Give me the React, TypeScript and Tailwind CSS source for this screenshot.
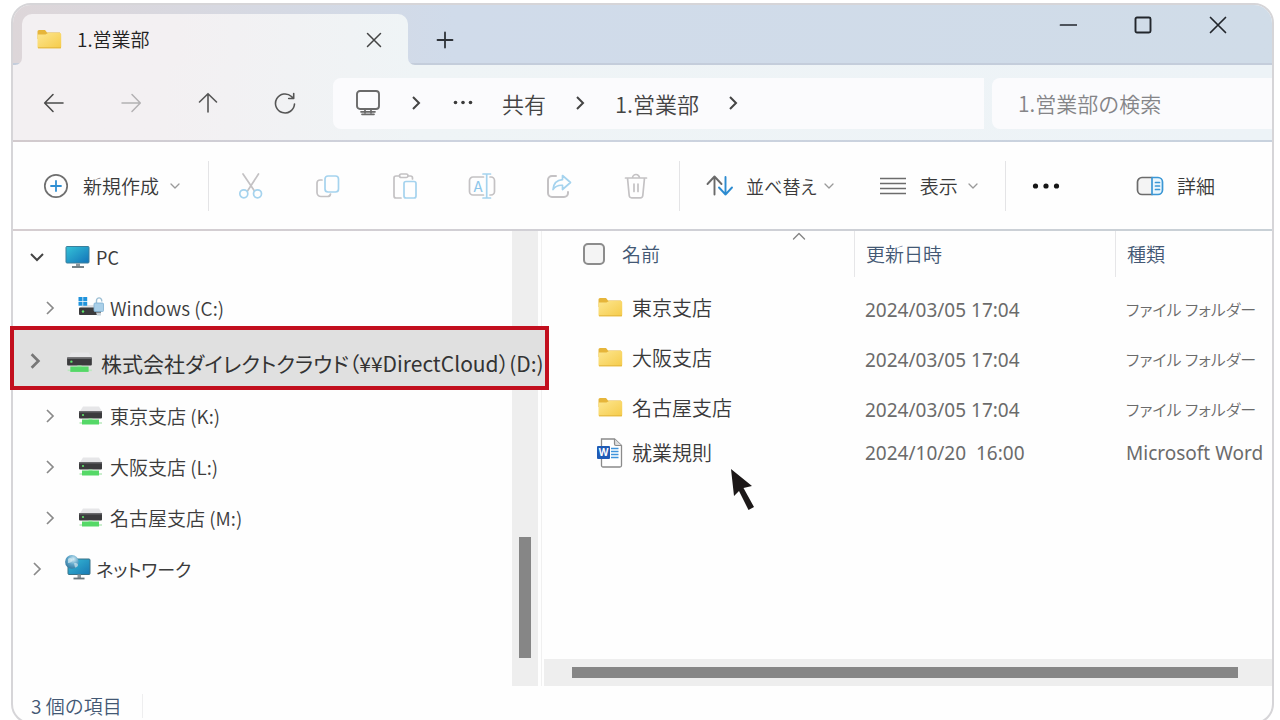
import type { ReactNode } from 'react';

type IconProps = { className?: string };

const stroke = {
  fill: 'none',
  stroke: 'currentColor',
  strokeLinecap: 'round' as const,
  strokeLinejoin: 'round' as const,
};

function Folder({ className = '' }: IconProps) {
  return (
    <svg width="26" height="22" viewBox="0 0 26 22" className={className} aria-hidden="true">
      <defs>
        <linearGradient id="folder-front" x1="0" y1="0" x2="1" y2="1">
          <stop offset="0" stopColor="#fde68f" />
          <stop offset="1" stopColor="#f5cb4a" />
        </linearGradient>
      </defs>
      <path d="M1.500 2.500A1.500 1.500 0 0 1 3 1H9l2 2.500H24V10H1.500z" fill="#e6b53a" />
      <path d="M1.500 5.500h8L12 4h12a1.200 1.200 0 0 1 1.200 1.200V18a1.200 1.200 0 0 1-1.200 1.200H2.700A1.200 1.200 0 0 1 1.500 18z" fill="url(#folder-front)" />
      <path d="M2 18.800h23" stroke="#e3b53c" strokeWidth="1" />
    </svg>
  );
}

function WordFile() {
  return (
    <svg width="26" height="30" viewBox="0 0 26 30" aria-hidden="true">
      <path d="M4.500 1h13L24.500 7.500V27.500a1.500 1.500 0 0 1-1.500 1.500H6a1.500 1.500 0 0 1-1.500-1.500z" fill="#fff" stroke="#8b8b8b" strokeWidth="1.300" />
      <path d="M17.500 1v5a1.500 1.500 0 0 0 1.500 1.500h5.500" fill="#ddd" stroke="#8b8b8b" strokeWidth="1.200" />
      <path d="M14 10.500h7.500M14 13.500h7.500M14 16.500h7.500M14 19.500h7.500" stroke="#3f94dc" strokeWidth="1.500" />
      <rect x="0" y="8" width="13" height="13" rx="1" fill="#1f5bb5" />
      <text x="6.500" y="18" textAnchor="middle" fontSize="10" fontWeight="700" fill="#fff" fontFamily="Open Sans, sans-serif">W</text>
    </svg>
  );
}

function Monitor() {
  return (
    <svg width="26" height="24" viewBox="0 0 26 24" aria-hidden="true">
      <defs>
        <linearGradient id="screen" x1="0" y1="0" x2="1" y2="1">
          <stop offset="0" stopColor="#35c3d8" />
          <stop offset="1" stopColor="#1272b8" />
        </linearGradient>
      </defs>
      <rect x="1" y="1.500" width="23" height="16.500" rx="1" fill="url(#screen)" stroke="#3a7f9c" strokeWidth="1" />
      <path d="M11 18.500h4v3h-4z" fill="#8d979c" />
      <path d="M7 22h12" stroke="#66747b" strokeWidth="1.800" />
    </svg>
  );
}

function NetworkIcon() {
  return (
    <svg width="28" height="28" viewBox="0 0 28 28" className="-mr-[2px] shrink-0" aria-hidden="true">
      <defs>
        <linearGradient id="net-screen" x1="0" y1="0" x2="1" y2="1">
          <stop offset="0" stopColor="#37bcd6" />
          <stop offset="1" stopColor="#1878b4" />
        </linearGradient>
        <radialGradient id="globe" cx="0.6" cy="0.3" r="0.8">
          <stop offset="0" stopColor="#d4ecf5" />
          <stop offset="0.500" stopColor="#5da4c8" />
          <stop offset="1" stopColor="#2e6f96" />
        </radialGradient>
      </defs>
      <rect x="3" y="4" width="22" height="15.500" rx="1" fill="url(#net-screen)" stroke="#3a7287" strokeWidth="1" />
      <path d="M12.500 19.500H16V23h-3.500z" fill="#8d979c" />
      <path d="M8.500 23.500h11" stroke="#66747b" strokeWidth="1.800" />
      <circle cx="6.900" cy="6.900" r="6.800" fill="url(#globe)" />
      <path d="M3 4c2-2 4-.5 4.500 1S5 8 3 8zM9 8.500c2-1 4 0 4 1.500s-2 3-3 2.500z" fill="#e4f3f7" opacity=".6" />
    </svg>
  );
}

function Drive({ className = 'w-[26px]' }: IconProps) {
  return (
    <svg viewBox="0 0 26 20" className={`shrink-0 ${className}`} aria-hidden="true">
      <path d="M5 .5h16l3.500 5.500h-23z" fill="#e6e6e8" />
      <rect x="1" y="5" width="23" height="7.500" rx="1" fill="#3b3b3d" />
      <rect x="1" y="5" width="23" height="1.500" fill="#69696c" />
      <circle cx="5" cy="9" r="1.100" fill="#5fe36a" />
      <path d="M1.500 17h22.500" stroke="#b9e8bd" strokeWidth="1.500" />
      <path d="M4 13.500h17v5H4z" fill="#55d867" />
      <path d="M10.500 12.500h4V14h-4z" fill="#8ae895" />
    </svg>
  );
}

function SystemDrive() {
  return (
    <svg width="26" height="22" viewBox="0 0 26 22" aria-hidden="true">
      <path d="M5 8h17l2 4H1z" fill="#e1e1e3" />
      <rect x="1" y="10.500" width="22" height="7.500" rx="1" fill="#3b3b3d" />
      <circle cx="5" cy="14.500" r="1.200" fill="#5fe36a" />
      <path d="M.5 0h4v4h-4zM5.200 0h4v4h-4zM.5 4.700h4v4h-4zM5.200 4.700h4v4h-4z" fill="#1f93dc" />
      <path d="M18.500 7V3.500a2.600 2.600 0 0 1 5.200 0v1" fill="none" stroke="#9dbfd4" strokeWidth="1.400" />
      <rect x="16" y="6" width="9.500" height="8.500" rx="1" fill="#a9cfe8" stroke="#7fb0d0" strokeWidth=".8" />
      <path d="M18 15.500h5v3h-4z" fill="#c9d3da" />
    </svg>
  );
}

function Chevron({ className = '' }: IconProps) {
  return (
    <svg viewBox="0 0 16 16" className={`shrink-0 ${className}`} {...stroke} strokeLinecap="butt" strokeLinejoin="miter" aria-hidden="true">
      <path d="M5 2l6 6-6 6" />
    </svg>
  );
}

function SmallDown() {
  return (
    <svg width="12" height="12" viewBox="0 0 12 12" className="text-[#9a9a9a]" {...stroke} strokeWidth="1.300" aria-hidden="true">
      <path d="M2 4l4 4 4-4" />
    </svg>
  );
}

function IconButton({ label, className = '', children }: { label: string; className?: string; children: ReactNode }) {
  return (
    <button type="button" aria-label={label} className={`flex shrink-0 items-center justify-center ${className}`}>
      {children}
    </button>
  );
}

function TitleBar() {
  return (
    <header className="flex h-[60px] items-end rounded-t-[18px] bg-linear-to-r from-[#ddd6d9] via-[#d0dbea] via-35% to-[#d0dce8] pl-[9px] shadow-[inset_0_-2px_0_#c4cddb]">
      <div className="relative flex h-[51px] w-[386px] shrink-0 items-center rounded-t-[10px] bg-linear-to-r from-[#f3f0f2] from-40% to-[#eff4f6] pr-[22px] pl-[14px]">
        <svg className="absolute bottom-0 -left-[7px] text-[#f3f0f2]" width="7" height="7" viewBox="0 0 7 7" aria-hidden="true">
          <path d="M7 0v7H0a7 7 0 0 0 7-7z" fill="currentColor" />
        </svg>
        <svg className="absolute -right-[7px] bottom-0 text-[#eff4f6]" width="7" height="7" viewBox="0 0 7 7" aria-hidden="true">
          <path d="M0 0v7h7a7 7 0 0 1-7-7z" fill="currentColor" />
        </svg>
        <Folder />
        <span className="ml-[15px] flex-1 pb-px text-[19px] leading-6 text-[#222]">1.営業部</span>
        <IconButton label="タブを閉じる" className="size-6 text-[#444]">
          <svg width="16" height="16" viewBox="0 0 16 16" {...stroke} strokeWidth="1.500"><path d="M1.500 1.500l13 13M14.500 1.500l-13 13" /></svg>
        </IconButton>
      </div>
      <IconButton label="新しいタブ" className="ml-[17px] h-[51px] w-10 text-[#2e3238]">
        <svg width="18" height="18" viewBox="0 0 18 18" {...stroke} strokeWidth="1.800"><path d="M9 1.500v15M1.500 9h15" /></svg>
      </IconButton>
      <div className="mr-[17px] ml-auto flex self-start text-[#22262c]">
        <IconButton label="最小化" className="h-10 w-[75px]">
          <svg width="18" height="18" viewBox="0 0 18 18" {...stroke} strokeWidth="1.700"><path d="M1.500 9h16" /></svg>
        </IconButton>
        <IconButton label="最大化" className="h-10 w-[75px]">
          <svg width="18" height="18" viewBox="0 0 18 18" {...stroke} strokeWidth="1.900"><rect x="1.500" y="1.500" width="15" height="15" rx="1.500" /></svg>
        </IconButton>
        <IconButton label="閉じる" className="h-10 w-[75px]">
          <svg width="18" height="18" viewBox="0 0 18 18" {...stroke} strokeWidth="1.700"><path d="M1.500 1.500l15 15M16.500 1.500l-15 15" /></svg>
        </IconButton>
      </div>
    </header>
  );
}

function NavBar() {
  return (
    <div className="h-[77px] bg-linear-to-r from-[#d2cacd] via-[#cdd3df] via-35% to-[#c8d2de] pb-[2px]">
      <nav aria-label="ナビゲーション" className="flex h-full items-center bg-linear-to-r from-[#f3f0f2] from-12% via-[#eff4f6] via-32% to-[#edf3f7] pt-px pl-[2px]">
        <IconButton label="戻る" className="h-12 w-[77px] text-[#4b4b4b]">
          <svg width="22" height="22" viewBox="0 0 22 22" {...stroke} strokeWidth="1.600"><path d="M20 11H2M10 2.500L1.700 11l8.300 8.500" /></svg>
        </IconButton>
        <IconButton label="進む" className="h-12 w-[77px] text-[#b3b1b3]">
          <svg width="22" height="22" viewBox="0 0 22 22" {...stroke} strokeWidth="1.500"><path d="M2 11h18M12 2.500l8.300 8.500-8.300 8.500" /></svg>
        </IconButton>
        <IconButton label="上へ" className="h-12 w-[77px] text-[#555]">
          <svg width="22" height="22" viewBox="0 0 22 22" {...stroke} strokeWidth="1.600"><path d="M11 20V2M2.500 10L11 1.700l8.500 8.300" /></svg>
        </IconButton>
        <IconButton label="更新" className="h-12 w-[77px] text-[#555]">
          <svg width="22" height="22" viewBox="0 0 22 22" {...stroke} strokeWidth="1.600"><path d="M20.500 12a9.500 9.500 0 1 1-3-7.500l2 2M19.700 1.500V6.500H14.700" /></svg>
        </IconButton>
        <div className="ml-[10px] flex h-[51px] flex-1 items-center rounded-l-lg bg-[#fbfbfd] pl-[22px] text-[22px] leading-7 text-[#444]">
          <svg width="26" height="28" viewBox="0 0 26 28" className="text-[#6a6a6a]" {...stroke} strokeWidth="1.900" aria-hidden="true">
            <rect x="2" y="2" width="22" height="18" rx="3" />
            <path d="M10 20v4M16 20v4M6 22.800h14" strokeWidth="1.700" />
            <path d="M7 25.300h12" strokeWidth="1.700" />
          </svg>
          <Chevron className="ml-[27px] size-4 stroke-2" />
          <svg width="20" height="6" viewBox="0 0 20 6" className="ml-[29px] text-[#3a3a3a]" fill="currentColor" aria-hidden="true">
            <circle cx="2.500" cy="2.500" r="1.800" /><circle cx="10" cy="2.500" r="1.800" /><circle cx="17.500" cy="2.500" r="1.800" />
          </svg>
          <a href="#share" className="ml-[29px]">共有</a>
          <Chevron className="ml-[26px] size-4 stroke-2" />
          <a href="#sales" className="ml-[27px]">1.営業部</a>
          <Chevron className="ml-[26px] size-4 stroke-2" />
        </div>
        <input
          type="search"
          aria-label="1.営業部の検索"
          placeholder="1.営業部の検索"
          className="ml-2 h-[51px] w-[280px] shrink-0 rounded-l-lg bg-[#fbfbfd] pl-[26px] text-[21px] outline-none placeholder:text-[#858588] placeholder:opacity-100"
        />
      </nav>
    </div>
  );
}

function Divider({ className = '' }: IconProps) {
  return <span className={`h-[50px] w-px shrink-0 bg-[#e4e4e6] ${className}`} />;
}

function Toolbar() {
  const gray = '#c4c2c4';
  const blue = '#a5d3ee';
  return (
    <div className="h-[89px] bg-linear-to-r from-[#d5cdd0] via-[#d0d0d6] to-[#c8d0d6] pb-[2px]">
      <div role="toolbar" className="flex h-full items-center bg-[#fefefe] pt-px text-[19px] leading-6 text-[#3a3a3a]">
        <button type="button" className="ml-[30px] flex shrink-0 items-center">
          <svg width="26" height="26" viewBox="0 0 26 26" {...stroke} aria-hidden="true">
            <circle cx="13" cy="13" r="11.200" stroke="#6f6f6f" strokeWidth="1.700" />
            <path d="M13 8v10M8 13h10" stroke="#2f8fd3" strokeWidth="1.800" />
          </svg>
          <span className="mr-[10px] ml-[14px]">新規作成</span>
          <SmallDown />
        </button>
        <Divider className="mr-[3px] ml-[27px]" />
        <IconButton label="切り取り" className="h-12 w-[77px]">
          <svg width="26" height="28" viewBox="0 0 26 28" {...stroke} strokeWidth="1.700">
            <path d="M5 2l11.500 17M20.500 2L9.500 19" stroke={gray} />
            <circle cx="5.800" cy="21.800" r="4" stroke={blue} /><circle cx="19.500" cy="21.800" r="4" stroke={blue} />
          </svg>
        </IconButton>
        <IconButton label="コピー" className="h-12 w-[77px]">
          <svg width="26" height="26" viewBox="0 0 26 26" {...stroke} strokeWidth="1.700">
            <path d="M7 7H5a3 3 0 0 0-3 3v9.500a4 4 0 0 0 4 4h6.500a3 3 0 0 0 3-2.500" stroke={gray} />
            <rect x="10" y="3" width="13.500" height="16" rx="3" stroke={blue} />
          </svg>
        </IconButton>
        <IconButton label="貼り付け" className="h-12 w-[77px]">
          <svg width="26" height="28" viewBox="0 0 26 28" {...stroke} strokeWidth="1.700">
            <path d="M7.500 4H4a2 2 0 0 0-2 2v18a2 2 0 0 0 2 2h5M16 4h2.500a2 2 0 0 1 2 2v1" stroke={gray} />
            <rect x="7.500" y="2" width="8.500" height="3.500" rx="1.700" stroke={gray} />
            <rect x="12" y="9.500" width="12" height="16.500" rx="2" stroke={blue} />
          </svg>
        </IconButton>
        <IconButton label="名前の変更" className="h-12 w-[77px]">
          <svg width="28" height="28" viewBox="0 0 28 28" {...stroke} strokeWidth="1.700">
            <path d="M15.500 5H5a3.500 3.500 0 0 0-3.500 3.500v11A3.500 3.500 0 0 0 5 23h10.500M22 5h1a3.500 3.500 0 0 1 3.500 3.500v11A3.500 3.500 0 0 1 23 23h-1" stroke={gray} />
            <path d="M15 2h7.500M15 26h7.500M18.700 2v24" stroke={blue} />
            <text x="10" y="19.500" textAnchor="middle" fontSize="15" fontFamily="Noto Sans CJK JP, sans-serif" fontWeight="400" fill="#8cc6ea" stroke="none">A</text>
          </svg>
        </IconButton>
        <IconButton label="共有" className="h-12 w-[77px]">
          <svg width="26" height="26" viewBox="0 0 26 26" {...stroke} strokeWidth="1.700">
            <path d="M10 3H6a4 4 0 0 0-4 4v13a4 4 0 0 0 4 4h12a4 4 0 0 0 4-4v-1" stroke={gray} strokeWidth="2" />
            <path d="M16.500 2.500L24.500 9.500l-8 7v-4.200c-4.500-.3-7.500 1.200-9.500 4.200.5-6 4-9.300 9.500-9.800z" stroke={blue} />
          </svg>
        </IconButton>
        <IconButton label="削除" className="h-12 w-[77px]">
          <svg width="24" height="28" viewBox="0 0 24 28" {...stroke} stroke={gray} strokeWidth="1.700">
            <path d="M1.500 6h21M8.500 6a3.500 3.500 0 0 1 7 0M3.500 6l1.700 17.500A2.500 2.500 0 0 0 7.700 25.800h8.600a2.500 2.500 0 0 0 2.500-2.300L20.500 6M10 12v7.500M14 12v7.500" />
          </svg>
        </IconButton>
        <Divider className="mr-[26px] ml-[5px]" />
        <button type="button" className="flex shrink-0 items-center">
          <svg width="28" height="24" viewBox="0 0 28 24" {...stroke} strokeWidth="1.900" aria-hidden="true">
            <path d="M8.500 20.500V3M1.500 10l7-7.500 7 7.500" stroke="#6a6a6a" />
            <path d="M19.500 3v17.500M13 13.500l6.500 7 6.500-7" stroke="#2c8bd0" />
          </svg>
          <span className="mr-[6px] ml-3 text-[18px] [font-feature-settings:'palt']">並べ替え</span>
          <SmallDown />
        </button>
        <button type="button" className="ml-[44px] flex shrink-0 items-center">
          <svg width="28" height="20" viewBox="0 0 28 20" stroke="#6c6c6c" strokeWidth="1.700" aria-hidden="true">
            <path d="M1 2.500h26M1 7.500h26M1 12.500h26M1 17.500h26" />
          </svg>
          <span className="mr-[9px] ml-[13px]">表示</span>
          <SmallDown />
        </button>
        <Divider className="mr-6 ml-[26px]" />
        <IconButton label="その他" className="h-12 w-8 text-[#161616]">
          <svg width="28" height="6" viewBox="0 0 28 6" fill="currentColor">
            <circle cx="3.500" cy="3" r="2.600" /><circle cx="14" cy="3" r="2.600" /><circle cx="24.500" cy="3" r="2.600" />
          </svg>
        </IconButton>
        <button type="button" className="mr-[57px] ml-auto flex shrink-0 items-center">
          <svg width="28" height="20" viewBox="0 0 28 20" {...stroke} strokeWidth="1.700" aria-hidden="true">
            <path d="M16 1.500H6A4.500 4.500 0 0 0 1.500 6v8A4.500 4.500 0 0 0 6 18.500h10" fill="#f4f4f4" stroke="#6c6c6c" />
            <path d="M16 1.500h6A4.500 4.500 0 0 1 26.500 6v8a4.500 4.500 0 0 1-4.500 4.500h-6z" fill="#eaf6fd" stroke="#3b97d5" />
            <path d="M19.500 6.500h4M19.500 10h4M19.500 13.500h4" stroke="#3b97d5" />
          </svg>
          <span className="ml-[13px]">詳細</span>
        </button>
      </div>
    </div>
  );
}

function TreeRow({ icon, label, nested = false, open = false }: { icon: ReactNode; label: string; nested?: boolean; open?: boolean }) {
  return (
    <li className={`flex h-[51px] items-center ${nested ? 'pl-[29px]' : 'pl-4'}`}>
      <Chevron className={open ? 'size-4 rotate-90 stroke-2 text-[#444]' : 'size-4 stroke-[1.7] text-[#8a8a8a]'} />
      <span className="ml-5 flex w-[26px] shrink-0 items-center">{icon}</span>
      <span className={`leading-6 [font-feature-settings:'palt'] ${nested ? 'ml-[6px] text-[19px]' : 'ml-[5px] text-[18px] font-normal'}`}>{label}</span>
    </li>
  );
}

function Sidebar() {
  return (
    <aside className="flex w-[528px] shrink-0">
      <ul className="min-w-0 flex-1 text-[#3c3c3c]">
        <TreeRow open icon={<Monitor />} label="PC" />
        <TreeRow nested icon={<SystemDrive />} label="Windows (C:)" />
        <li className="relative z-10 -mt-[7px] -mr-[37px] -ml-[3px] flex h-16 items-center border-4 border-[#c20f1e] bg-[#e0e0e0] pt-[10px] pl-3">
          <Chevron className="mb-1 size-[18px] stroke-[2.4] text-[#777]" />
          <Drive className="ml-[22px] w-7" />
          <span className="ml-[7px] text-[21px] leading-7 font-normal whitespace-nowrap text-[#333] [font-feature-settings:'palt']">
            株式会社ダイレクトクラウド（¥¥DirectCloud）(D:)
          </span>
        </li>
        <TreeRow nested icon={<Drive />} label="東京支店 (K:)" />
        <TreeRow nested icon={<Drive />} label="大阪支店 (L:)" />
        <TreeRow nested icon={<Drive />} label="名古屋支店 (M:)" />
        <TreeRow icon={<NetworkIcon />} label="ネットワーク" />
      </ul>
      <div className="mr-[3px] flex w-[26px] flex-col items-center justify-end bg-[#eee] pb-7">
        <div className="h-[121px] w-3 bg-[#868686]" />
      </div>
    </aside>
  );
}

const files = [
  { name: '東京支店', date: '2024/03/05 17:04', type: 'ファイル フォルダー', word: false },
  { name: '大阪支店', date: '2024/03/05 17:04', type: 'ファイル フォルダー', word: false },
  { name: '名古屋支店', date: '2024/03/05 17:04', type: 'ファイル フォルダー', word: false },
  { name: '就業規則', date: '2024/10/20  16:00', type: 'Microsoft Word', word: true },
];

function FileList() {
  return (
    <main className="relative flex min-w-0 flex-1 flex-col border-l border-[#f0f0f0] pl-[2px]">
      <div className="flex-1">
        <table className="w-full table-fixed text-left">
          <colgroup>
            <col className="w-[310px]" />
            <col className="w-[261px]" />
            <col />
          </colgroup>
          <thead className="text-[19px] leading-6 text-[#435874]">
            <tr className="h-[52px] align-top">
              <th scope="col" className="relative p-0 font-[350]">
                <div className="flex h-[46px] items-center pl-[39px]">
                  <input type="checkbox" aria-label="すべて選択" className="size-[22px] appearance-none rounded-[5px] border-2 border-[#8c8c8c] bg-[#f4f4f4]" />
                  <span className="ml-[17px]">名前</span>
                </div>
                <svg width="14" height="8" viewBox="0 0 14 8" className="absolute top-px right-[48px] text-[#858585]" {...stroke} strokeWidth="1.400" aria-hidden="true">
                  <path d="M1.500 7L7 1.500 12.500 7" />
                </svg>
              </th>
              <th scope="col" className="p-0 font-[350]">
                <div className="flex h-[46px] items-center border-l border-[#e6e6e8] pl-[11px]">更新日時</div>
              </th>
              <th scope="col" className="p-0 font-[350]">
                <div className="flex h-[46px] items-center border-l border-[#e6e6e8] pl-[11px]">種類</div>
              </th>
            </tr>
          </thead>
          <tbody className="text-[#6b6b6b]">
            {files.map((file) => (
              <tr key={file.name} className={file.word ? 'h-10' : 'h-[50px]'}>
                <td className="p-0">
                  <div className="flex items-center pl-[53px] text-[20px] leading-6 text-[#3a3a3a]">
                    {file.word ? <WordFile /> : <Folder />}
                    <span className="ml-[9px]">{file.name}</span>
                  </div>
                </td>
                <td className={`p-0 pl-[11px] font-['Noto_Sans','Noto_Sans_CJK_JP',sans-serif] text-[19px] leading-6 font-normal whitespace-pre ${file.word ? '' : 'pt-1'}`}>
                  {file.date}
                </td>
                <td
                  className={
                    file.word
                      ? "p-0 pl-[11px] font-['Noto_Sans','Noto_Sans_CJK_JP',sans-serif] text-[19px] leading-6 font-normal whitespace-nowrap"
                      : "p-0 pt-[2px] pl-[11px] text-[16px] leading-6 whitespace-nowrap [font-feature-settings:'palt']"
                  }
                >
                  {file.type}
                </td>
              </tr>
            ))}
          </tbody>
        </table>
      </div>
      <div className="flex h-[27px] items-center bg-[#eee] pr-[34px] pl-7">
        <div className="h-[11px] flex-1 bg-[#868686]" />
      </div>
      <svg width="24" height="42" viewBox="0 0 24 42" className="absolute top-[238px] left-[189px]" aria-hidden="true">
        <path d="M0 0L21 17 12.500 19 23 38 17.500 41 8 22 3 27z" fill="#1c1818" />
      </svg>
    </main>
  );
}

export default function App() {
  return (
    <div className="flex h-screen flex-col overflow-hidden bg-white pt-[3px] pr-[6px] pl-[11px] font-['Noto_Sans_CJK_JP',sans-serif] font-[350]">
      <div className="-mb-1 flex min-h-0 flex-1 flex-col rounded-[20px] border-2 border-[#d6d5d8] bg-[#fefefe]">
        <TitleBar />
        <NavBar />
        <Toolbar />
        <div className="flex min-h-0 flex-1">
          <Sidebar />
          <FileList />
        </div>
        <footer className="flex h-9 shrink-0 items-center pt-1 pl-[18px] text-[19px] leading-6 text-[#435874]">
          <span>3 個の項目</span>
          <span className="ml-[20px] h-6 w-px bg-[#eeeeef]" />
        </footer>
      </div>
    </div>
  );
}
